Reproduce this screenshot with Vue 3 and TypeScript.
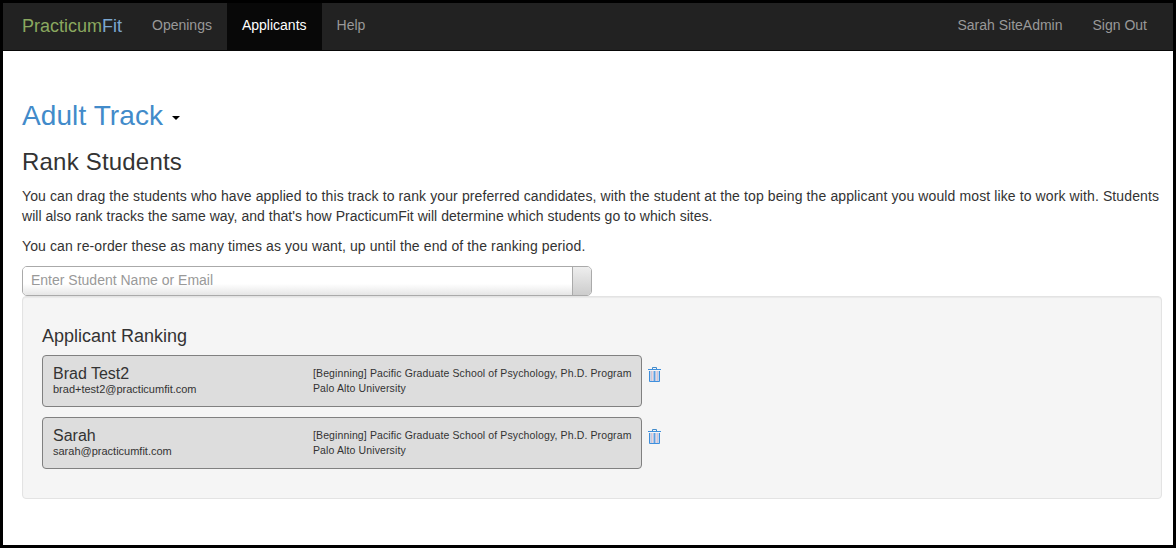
<script setup lang="ts">
interface Applicant {
  name: string;
  email: string;
}
const applicants: Applicant[] = [
  { name: 'Brad Test2', email: 'brad+test2@practicumfit.com' },
  { name: 'Sarah', email: 'sarah@practicumfit.com' },
];
</script>

<template>
  <div class="frame">
    <nav class="navbar">
      <a class="brand">Practicum<span class="fit">Fit</span></a>
      <a class="link">Openings</a>
      <a class="link active">Applicants</a>
      <a class="link">Help</a>
      <div class="spacer"></div>
      <a class="link">Sarah SiteAdmin</a>
      <a class="link last">Sign Out</a>
    </nav>
    <main class="content">
      <h1 class="track">Adult Track <span class="caret"></span></h1>
      <h2 class="rank">Rank Students</h2>
      <p class="para"><span class="wide">You can drag the students who have applied to this track to rank your preferred candidates, with the student at the top being the applicant you would most like to work with. Students</span> <span class="narrow">will also rank tracks the same way, and that's how PracticumFit will determine which students go to which sites.</span></p>
      <p class="para wide">You can re-order these as many times as you want, up until the end of the ranking period.</p>
      <div class="combo">
        <div class="combo-input">Enter Student Name or Email</div>
        <div class="combo-btn"></div>
      </div>
      <section class="well">
        <h3 class="well-title">Applicant Ranking</h3>
        <div v-for="a in applicants" :key="a.email" class="row">
          <div class="card">
            <div class="person">
              <div class="name">{{ a.name }}</div>
              <div class="email">{{ a.email }}</div>
            </div>
            <div class="school">
              <div>[Beginning] Pacific Graduate School of Psychology, Ph.D. Program</div>
              <div>Palo Alto University</div>
            </div>
          </div>
          <svg class="trash" width="14" height="16" viewBox="0 0 14 16" fill="none" stroke-width="1">
            <path d="M0 3.5H13" stroke="#3f8fdc" />
            <path d="M4.5 3V1.5H8.5V3" stroke="#428bca" />
            <path d="M3 5V15M10 5V15" stroke="#8fbce8" />
            <path d="M4 5V15M9 5V15" stroke="#dcb4c4" />
            <path d="M6.5 5V15" stroke="#5f9fe0" stroke-width="2" />
            <path d="M1.5 5V15.5H11.5V5" stroke="#3f8fdc" />
          </svg>
        </div>
      </section>
    </main>
  </div>
</template>

<style>
html, body { margin: 0; background: #000; }
</style>

<style scoped>
.frame {
  box-sizing: border-box;
  width: 1176px;
  height: 548px;
  border: 3px solid #000;
  background: #fff;
  font-family: "Liberation Sans", Arial, sans-serif;
  font-size: 14px;
  line-height: 20px;
  color: #333;
  overflow: hidden;
}
.navbar {
  display: flex;
  align-items: stretch;
  height: 47px;
  background: #222;
  border-bottom: 1px solid #080808;
  padding-left: 19px;
}
.brand {
  font-size: 18px;
  line-height: 46px;
  color: #8aa85f;
  padding-right: 15px;
}
.fit { color: #7ba7d0; }
.link {
  color: #999;
  padding: 0 15px;
  line-height: 44px;
}
.link.active {
  color: #fff;
  background: #080808;
}
.link.last { margin-right: 11px; }
.spacer { flex: 1; }
.content { padding: 0 11px 0 19px; }
.track {
  margin: 46px 0 0;
  font-size: 28px;
  line-height: 38px;
  font-weight: 400;
  letter-spacing: 0.1px;
  color: #428bca;
}
.caret {
  display: inline-block;
  width: 0;
  height: 0;
  margin-left: 1px;
  vertical-align: middle;
  border-top: 4px solid #000;
  border-left: 4px solid transparent;
  border-right: 4px solid transparent;
}
.rank {
  margin: 14px 0 0;
  font-size: 24px;
  line-height: 26px;
  font-weight: 400;
  letter-spacing: 0.2px;
}
.para { margin: 10px 0 0; }
.rank + .para { margin-top: 11px; }
.wide { letter-spacing: 0.11px; }
.narrow { letter-spacing: 0.03px; }
.combo {
  display: flex;
  width: 570px;
  height: 30px;
  margin-top: 10px;
  box-sizing: border-box;
  border: 1px solid #aaa;
  border-radius: 5px;
  overflow: hidden;
}
.combo-input {
  flex: 1;
  padding-left: 8px;
  line-height: 27px;
  color: #999;
  background: linear-gradient(#fff 60%, #e6e6e6);
}
.combo-btn {
  width: 18px;
  border-left: 1px solid #aaa;
  background: linear-gradient(#eee, #ccc);
}
.well {
  box-sizing: border-box;
  height: 203px;
  padding: 29px 19px 0;
  background: #f5f5f5;
  border: 1px solid #e3e3e3;
  border-radius: 4px;
  box-shadow: inset 0 1px 1px rgba(0, 0, 0, 0.05);
}
.well-title {
  margin: 0 0 9px;
  font-size: 18px;
  line-height: 20px;
  font-weight: 400;
}
.row {
  display: flex;
  align-items: flex-start;
  margin-bottom: 10px;
}
.card {
  box-sizing: border-box;
  display: flex;
  width: 600px;
  height: 52px;
  padding: 9px 10px 0;
  background: #ddd;
  border: 1px solid #808080;
  border-radius: 4px;
}
.person { flex: none; width: 260px; }
.name {
  font-size: 16px;
  line-height: 18px;
}
.email {
  font-size: 11px;
  line-height: 12px;
}
.school {
  padding-top: 1px;
  font-size: 10.5px;
  line-height: 15px;
  letter-spacing: 0.12px;
  white-space: nowrap;
}
.trash { margin: 11px 0 0 6px; }
</style>
